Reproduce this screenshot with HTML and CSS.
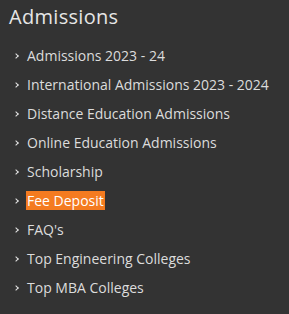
FILE: index.html
```html
<!DOCTYPE html>
<html lang="en">
<head>
  <meta charset="UTF-8" />
  <title>Admissions</title>
  <link rel="stylesheet" href="styles.css">
</head>
<body>

<div class="widget">
  <h2 class="widget-title">Admissions</h2>
  <ul class="links">
    <li><a href="#">Admissions 2023 - 24</a></li>
    <li><a href="#">International Admissions 2023 - 2024</a></li>
    <li><a href="#">Distance Education Admissions</a></li>
    <li><a href="#">Online Education Admissions</a></li>
    <li><a href="#">Scholarship</a></li>
    <li><a href="#" class="active">Fee Deposit</a></li>
    <li><a href="#">FAQ's</a></li>
    <li><a href="#">Top Engineering Colleges</a></li>
    <li><a href="#">Top MBA Colleges</a></li>
  </ul>
</div>

</body>
</html>
```

FILE: styles.css
```css
body {
  margin: 0;
  padding: 0;
  background: #333333;
  font-family: 'Open Sans', 'DejaVu Sans', sans-serif;
  color: #dcdcdc;
}

.widget {
  padding: 5px 9px 10px;
}

.widget-title {
  margin: 0;
  font-size: 20px;
  font-weight: 500;
  letter-spacing: 0.3px;
  line-height: 24px;
  color: #e6e6e6;
}

.links {
  list-style: none;
  margin: 12px 0 0;
  padding: 0;
}

.links li {
  position: relative;
  height: 29px;
  line-height: 29px;
  padding-left: 17px;
  font-size: 14px;
}

.links li::before {
  content: '';
  position: absolute;
  left: 5px;
  top: 13px;
  width: 3px;
  height: 3px;
  border-top: 1.5px solid #e6e6e6;
  border-right: 1.5px solid #e6e6e6;
  transform: rotate(45deg);
}

.links a {
  color: #dcdcdc;
  text-decoration: none;
  padding: 0 1px;
}

.links a.active {
  background: #f47b20;
  color: #fff;
}
```
